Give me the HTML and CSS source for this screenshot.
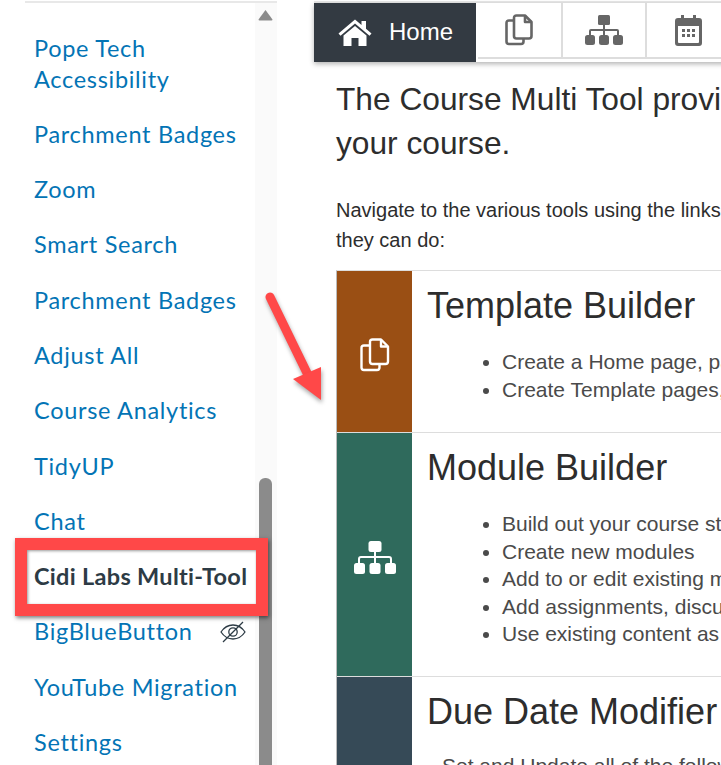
FILE: index.html
```html
<!DOCTYPE html>
<html lang="en">
<head>
<meta charset="utf-8">
<title>Course Multi Tool</title>
<link rel="stylesheet" href="styles.css">
</head>
<body>
<div class="app">
  <aside class="side">
    <nav class="nav">
      <a class="item">Pope Tech Accessibility</a>
      <a class="item">Parchment Badges</a>
      <a class="item">Zoom</a>
      <a class="item">Smart Search</a>
      <a class="item">Parchment Badges</a>
      <a class="item">Adjust All</a>
      <a class="item">Course Analytics</a>
      <a class="item">TidyUP</a>
      <a class="item">Chat</a>
      <a class="item active">Cidi Labs Multi-Tool</a>
      <a class="item hidden-item">BigBlueButton
        <svg class="eye" viewBox="0 0 26 22" width="26" height="22" fill="none" stroke="#2d3b45" stroke-width="1.3"><path d="M1 11c3-4.500 7-7 12-7s9 2.500 12 7c-3 4.500-7 7-12 7s-9-2.500-12-7z"/><circle cx="13" cy="11" r="4.200"/><path d="M3 21L23 1"/></svg>
      </a>
      <a class="item">YouTube Migration</a>
      <a class="item">Settings</a>
    </nav>
    <div class="track">
      <svg class="up" viewBox="0 0 15 12" width="15" height="12"><path d="M7.500 1L14.500 10.500Q14.500 11.500 13.500 11.500H1.500Q.5 11.500 .5 10.500Z" fill="#8b8b8b"/></svg>
      <div class="thumb"></div>
    </div>
  </aside>
  <main class="main">
    <div class="tabs">
      <div class="tab home">
        <svg viewBox="0 0 36 28" width="36" height="28"><path d="M18 1.500L1.500 15.500l2 2.300L18 5.500l14.500 12.300 2-2.300L29 10.800V3h-4.500v4z" fill="#fff"/><path d="M18 8L6.500 17.500V28H14.500V20H21.500V28H29.500V17.500z" fill="#fff"/></svg>
        <span>Home</span>
      </div>
      <div class="tab">
        <svg viewBox="0 0 28 32" width="28" height="32" fill="none" stroke="#666" stroke-width="2.600" stroke-linejoin="round"><path d="M9 6.500H4Q1.500 6.500 1.500 9V27.500Q1.500 30 4 30H16Q18.500 30 18.500 27.500V24.500"/><path d="M11.500 1.500H20L26.500 8V22Q26.500 24.500 24 24.500H11.500Q9 24.500 9 22V4Q9 1.500 11.500 1.500Z"/><path d="M20 1.500V8H26.500"/></svg>
      </div>
      <div class="tab">
        <svg viewBox="0 0 38 30" width="38" height="30" fill="#666"><rect x="13" y="0" width="12" height="10" rx="1.500"/><path d="M18 10h2v4h12a2 2 0 0 1 2 2v4h-2v-4H20v4h-2v-4H6v4H4v-4a2 2 0 0 1 2-2h12z"/><rect x="0" y="20" width="10" height="10" rx="2.500"/><rect x="14" y="20" width="10" height="10" rx="2.500"/><rect x="28" y="20" width="10" height="10" rx="2.500"/></svg>
      </div>
      <div class="tab">
        <svg viewBox="0 0 27 31" width="27" height="31"><path d="M6 0h3v3h9V0h3v3h3a3 3 0 0 1 3 3v22a3 3 0 0 1-3 3H3a3 3 0 0 1-3-3V6a3 3 0 0 1 3-3h3zM3 11v16a1 1 0 0 0 1 1h19a1 1 0 0 0 1-1V11z" fill="#666"/><path d="M7 14h3v3H7zM12 14h3v3h-3zM17 14h3v3h-3zM7 19h3v3H7zM12 19h3v3h-3zM17 19h3v3h-3z" fill="#666"/></svg>
      </div>
    </div>
    <div class="content">
      <p class="lead">The Course Multi Tool provides tools for building<br>your course.</p>
      <p class="intro">Navigate to the various tools using the links above. Here is what<br>they can do:</p>
      <div class="rows">
        <section class="row row-template">
          <div class="swatch brown">
            <svg viewBox="0 0 30 34" width="30" height="34" fill="none" stroke="#fff" stroke-width="2.400" stroke-linejoin="round"><path d="M10 7.500H4Q1.500 7.500 1.500 10V29.500Q1.500 32 4 32H17Q19.500 32 19.500 29.500V26"/><path d="M12.500 1.500H21L28 8.500V23.500Q28 26 25.500 26H12.500Q10 26 10 23.500V4Q10 1.500 12.500 1.500Z"/><path d="M21 1.500V8.500H28"/></svg>
          </div>
          <div class="body">
            <h2>Template Builder</h2>
            <ul>
              <li>Create a Home page, pages, and a syllabus</li>
              <li>Create Template pages, and reuse them</li>
            </ul>
          </div>
        </section>
        <section class="row row-module">
          <div class="swatch green">
            <svg viewBox="0 0 42 34" width="42" height="34" fill="#fff"><rect x="14.500" y="0" width="13" height="11" rx="2.500"/><path d="M20 11h2v4h13a3 3 0 0 1 3 3v4h-2v-4a1 1 0 0 0-1-1H22v5h-2v-5H7a1 1 0 0 0-1 1v4H4v-4a3 3 0 0 1 3-3h13z"/><rect x="0" y="22" width="11" height="11" rx="2.500"/><rect x="15.500" y="22" width="11" height="11" rx="2.500"/><rect x="31" y="22" width="11" height="11" rx="2.500"/></svg>
          </div>
          <div class="body">
            <h2>Module Builder</h2>
            <ul>
              <li>Build out your course structure at once</li>
              <li>Create new modules</li>
              <li>Add to or edit existing modules</li>
              <li>Add assignments, discussions, and pages</li>
              <li>Use existing content as a starting point</li>
            </ul>
          </div>
        </section>
        <section class="row row-due">
          <div class="swatch slate"></div>
          <div class="body">
            <h2>Due Date Modifier</h2>
            <p class="due-text">Set and Update all of the following dates</p>
          </div>
        </section>
      </div>
    </div>
  </main>
</div>
<div class="callout"></div>
<svg class="arrow" viewBox="0 0 70 120" width="70" height="120">
  <path class="arrow-shape" d="M5 7L42 83" stroke="#ff4848" stroke-width="9" stroke-linecap="round" fill="none"/>
  <path class="arrow-shape" d="M28 89L56 77L56 110Z" fill="#ff4848"/>
</svg>
</body>
</html>
```
FILE: styles.css
```css
* { box-sizing: border-box; }
html, body { margin: 0; height: 765px; overflow: hidden; background: #fff; }
body { position: relative; font-family: "Liberation Sans", Arial, sans-serif; color: #2d3b45; }
.app { display: flex; height: 765px; width: 721px; overflow: hidden; }
.side { flex: 0 0 252px; margin-left: 25px; border-top: 2px solid #e8e8e8; margin-top: 1px; display: flex; height: 764px; }
.nav { width: 230px; padding: 29.500px 0 0 9px; flex: none; font-family: Lato, sans-serif; font-size: 23.500px; letter-spacing: .7px; line-height: 31px; color: #0374b5; display: flex; flex-direction: column; gap: 24.300px; }
.item { display: flex; align-items: center; justify-content: space-between; padding-right: 9px; }
.active { font-weight: 700; color: #2d3b45; letter-spacing: .3px; white-space: nowrap; }
.eye { flex: none; }
.track { flex: 1; background: #fafafa; position: relative; }
.up { position: absolute; left: 3px; top: 6px; }
.thumb { position: absolute; left: 4px; width: 13px; top: 475px; bottom: 0; background: #8b8b8b; border-radius: 6px 6px 0 0; }
.main { flex: none; width: 407px; margin-left: 37px; border-top: 2px solid #e8e8e8; margin-top: 1px; }
.tabs { display: flex; align-items: flex-start; height: 59px; width: 440px; box-shadow: 0 2px 5px rgba(0,0,0,.3); position: relative; background: #fff; }
.tab { flex: none; width: 84.500px; height: 56px; display: flex; align-items: center; justify-content: center; border-right: 2px solid #ddd; border-bottom: 2px solid #ddd; background: #fff; }
.home { width: 164px; height: 59px; background: #333a42; color: #fff; font-size: 24px; gap: 16px; justify-content: flex-start; padding: 0 0 2px 23px; border-right: 2px solid #fff; border-bottom: 0; }
.content { padding: 15px 0 0 22px; width: 600px; }
.lead { margin: 0 0 30px; width: 760px; font-size: 31.700px; line-height: 44px; color: #2d2d2d; }
.intro { margin: 0 0 15px; width: 640px; font-size: 20px; line-height: 30px; color: #2d2d2d; }
.rows { border-left: 1px solid #bbb; border-top: 1px solid #ddd; }
.row { display: flex; border-bottom: 1px solid #ddd; }
.row-template { height: 162px; }
.row-module { height: 244px; }
.row-due { height: 120px; border-bottom: 0; }
.swatch { flex: 0 0 75px; display: flex; align-items: center; justify-content: center; padding-top: 7px; color: #fff; }
.brown { background: #9a4f14; }
.green { background: #2f6a5c; }
.slate { background: #364a57; }
.body { padding: 14px 0 0 15px; white-space: nowrap; }
h2 { margin: 0 0 21px; font-weight: 400; font-size: 36px; line-height: 42px; color: #2d2d2d; }
ul { margin: 0; padding: 0 0 0 75px; font-size: 21px; line-height: 27.500px; color: #4a4a4a; }
.due-text { margin: 0 0 0 15px; font-size: 21px; color: #4a4a4a; }
.callout { position: absolute; left: 15px; top: 538px; width: 253px; height: 78px; border: 12px solid #ff4848; box-shadow: 1px 2px 4px rgba(0,0,0,.5), inset 1px 1px 3px rgba(0,0,0,.4); }
.arrow { position: absolute; left: 265px; top: 290px; overflow: visible; }
.arrow-shape { filter: drop-shadow(1px 3px 2px rgba(0,0,0,.35)); }
```
